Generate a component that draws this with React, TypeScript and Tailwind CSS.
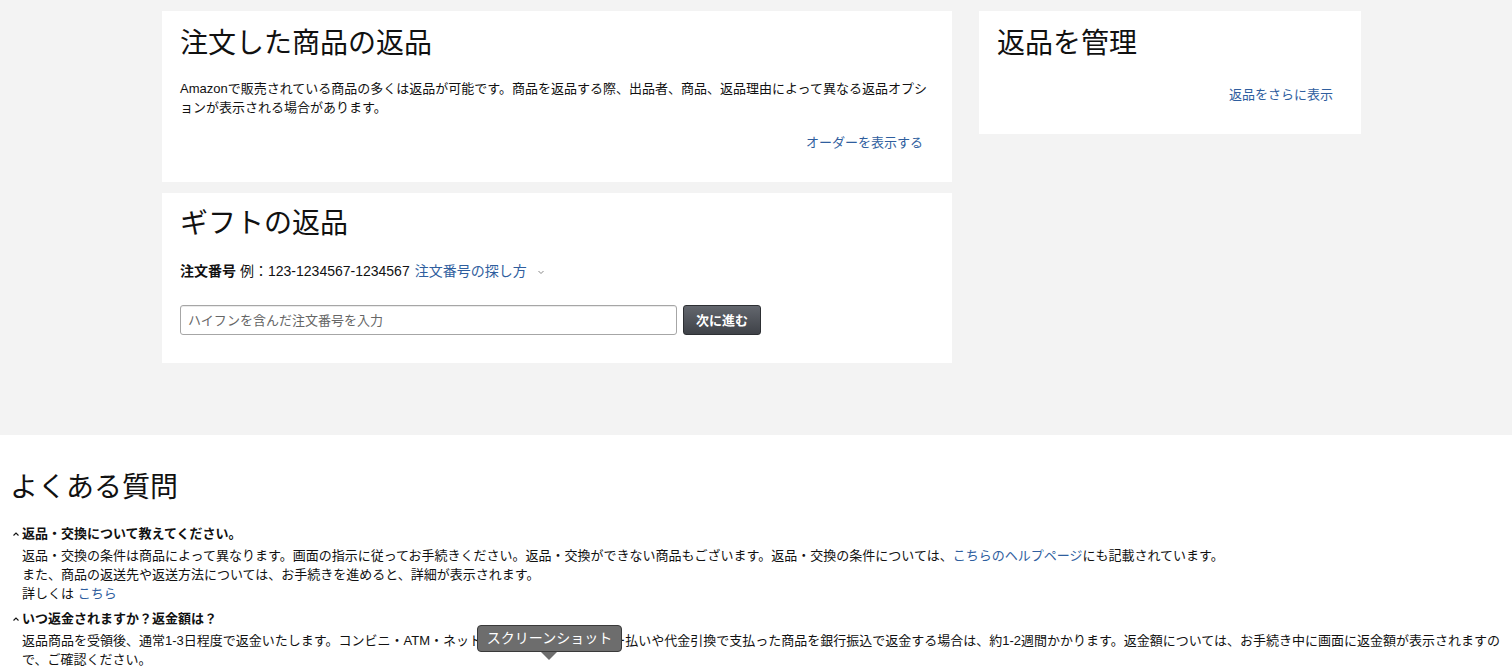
const font = { fontFamily: '"Liberation Sans", "Noto Sans CJK JP", sans-serif' };

function Card({ className, children }: { className: string; children: React.ReactNode }) {
  return <div className={'bg-white px-[18px] ' + className}>{children}</div>;
}

function Caret() {
  return (
    <svg width="8" height="8" viewBox="0 0 8 8" className="mr-[2px] shrink-0">
      <path d="M1.5 5.5 L4 3 L6.5 5.5" fill="none" stroke="#111" strokeWidth="1.1" />
    </svg>
  );
}

export default function App() {
  return (
    <div style={font} className="min-h-screen bg-white text-[13px] leading-[19px] text-[#111]">
      <div className="bg-[#f3f3f3] h-[435px] pt-[11px] pl-[162px]">
        <div className="flex gap-[27px] items-start">
          <div className="flex flex-col gap-[11px] w-[790px]">
            <Card className="pt-[15px] pb-[30px]">
              <h1 className="text-[28px] leading-[36px] font-normal">注文した商品の返品</h1>
              <p className="mt-[17px] -mr-[4px]">
                Amazonで販売されている商品の多くは返品が可能です。商品を返品する際、出品者、商品、返品理由によって異なる返品オプションが表示される場合があります。
              </p>
              <div className="mt-[16px] flex justify-end pr-[11px]">
                <a className="text-[#2f5e9e]">オーダーを表示する</a>
              </div>
            </Card>
            <Card className="pt-[13px] pb-[28px]">
              <h1 className="text-[28px] leading-[36px] font-normal">ギフトの返品</h1>
              <div className="mt-[19px] flex items-center text-[14px] leading-[20px]">
                <span className="font-bold">注文番号</span>
                <span className="ml-[4px]">例：123-1234567-1234567</span>
                <a className="ml-[5px] text-[#2f5e9e]">注文番号の探し方</a>
                <svg width="8" height="8" viewBox="0 0 8 8" className="ml-[10px] mt-[2px]">
                  <path d="M1.5 3 L4 5.5 L6.5 3" fill="none" stroke="#888" strokeWidth="1" />
                </svg>
              </div>
              <div className="mt-[24px] flex gap-[6px]">
                <input
                  className="w-[497px] h-[30px] border border-[#a6a6a6] rounded-[3px] px-[7px] text-[13px] outline-none placeholder:text-[#666] shadow-[inset_0_1px_0_rgba(0,0,0,0.08)]"
                  style={font}
                  placeholder="ハイフンを含んだ注文番号を入力"
                />
                <button className="w-[78px] h-[30px] rounded-[3px] border border-[#2d2f33] bg-gradient-to-b from-[#63676e] to-[#3f4248] text-white font-bold text-[13px]">
                  次に進む
                </button>
              </div>
            </Card>
          </div>
          <Card className="w-[382px] pt-[15px] pb-[30px]">
            <h1 className="text-[28px] leading-[36px] font-normal">返品を管理</h1>
            <div className="mt-[23px] flex justify-end pr-[10px]">
              <a className="text-[#2f5e9e]">返品をさらに表示</a>
            </div>
          </Card>
        </div>
      </div>

      <div className="px-[10px] pt-[35px]">
        <h2 className="text-[28px] leading-[36px] font-normal">よくある質問</h2>
        <div className="mt-[18px]">
          <div className="flex items-center pl-[2px] font-bold">
            <Caret />
            <span>返品・交換について教えてください。</span>
          </div>
          <div className="pl-[12px] mt-[3px]">
            <p>
              返品・交換の条件は商品によって異なります。画面の指示に従ってお手続きください。返品・交換ができない商品もございます。返品・交換の条件については、
              <a className="text-[#2f5e9e]">こちらのヘルプページ</a>にも記載されています。
            </p>
            <p>また、商品の返送先や返送方法については、お手続きを進めると、詳細が表示されます。</p>
            <p>
              詳しくは <a className="text-[#2f5e9e]">こちら</a>
            </p>
          </div>
          <div className="flex items-center pl-[2px] font-bold mt-[6px]">
            <Caret />
            <span>いつ返金されますか？返金額は？</span>
          </div>
          <div className="pl-[12px] mt-[3px] relative">
            <p>
              返品商品を受領後、通常1-3日程度で返金いたします。コンビニ・ATM・ネットバンキング・電子マネー払いや代金引換で支払った商品を銀行振込で返金する場合は、約1-2週間かかります。返金額については、お手続き中に画面に返金額が表示されますので、ご確認ください。
            </p>
            {/* screenshot tool tooltip sitting over the text */}
            <div className="absolute left-[467px] top-[-6px] w-[145px] h-[27px] rounded-[4px] border border-[#3a3a3a] bg-[#6d6d6d] text-white text-[14px] flex items-center justify-center">
              スクリーンショット
              <span className="absolute left-[63px] bottom-[-9px] w-0 h-0 border-l-[8px] border-r-[8px] border-t-[8px] border-l-transparent border-r-transparent border-t-[#6d6d6d]" />
            </div>
          </div>
        </div>
      </div>
    </div>
  );
}
